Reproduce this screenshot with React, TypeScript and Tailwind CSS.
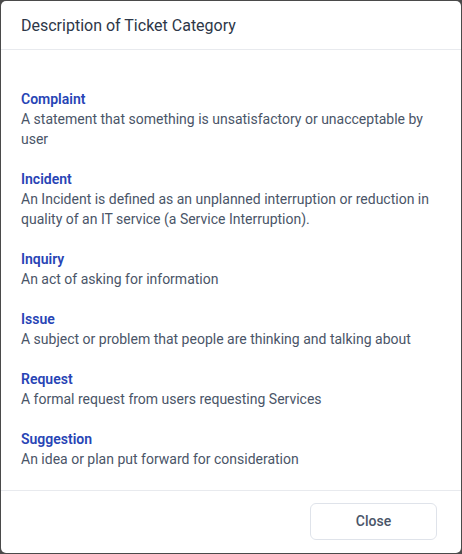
import React from "react";

const items = [
  { t: "Complaint", d: "A statement that something is unsatisfactory or unacceptable by user" },
  { t: "Incident", d: "An Incident is defined as an unplanned interruption or reduction in quality of an IT service (a Service Interruption)." },
  { t: "Inquiry", d: "An act of asking for information" },
  { t: "Issue", d: "A subject or problem that people are thinking and talking about" },
  { t: "Request", d: "A formal request from users requesting Services" },
  { t: "Suggestion", d: "An idea or plan put forward for consideration" },
];

export default function App() {
  return (
    <div className="w-[462px] h-[554px] bg-[#4a4a4a] p-px" style={{ fontFamily: "Roboto, 'Noto Sans', sans-serif" }}>
      <div className="w-full h-full bg-white rounded-[5px] flex flex-col overflow-hidden">
        <div className="h-[49px] border-b border-[#e8eaee] flex items-center px-5 pt-px shrink-0">
          <h2 className="text-[16px] text-[#2d3748] leading-6">Description of Ticket Category</h2>
        </div>
        <div className="flex-1 px-5 pt-[39px] pb-5 flex flex-col gap-5">
          {items.map((it) => (
            <div key={it.t}>
              <div className="text-[14px] leading-5 font-semibold text-[#2744b5]">{it.t}</div>
              <div className="text-[14px] leading-5 text-[#4a5568]">{it.d}</div>
            </div>
          ))}
        </div>
        <div className="border-t border-[#e8eaee] flex justify-end px-6 pt-3 pb-[13px] shrink-0">
          <button className="w-[127px] h-[37px] rounded-md border border-[#dfe3ea] bg-white text-[14px] font-medium text-[#4a5568]">Close</button>
        </div>
      </div>
    </div>
  );
}
